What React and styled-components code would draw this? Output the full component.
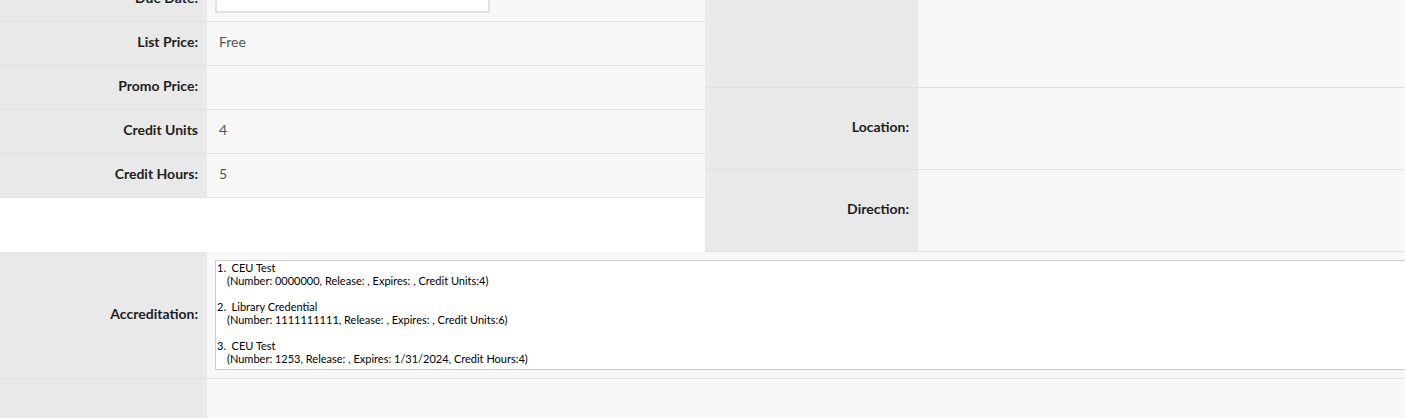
import React from "react";
import styled, { createGlobalStyle } from "styled-components";

const Global = createGlobalStyle`
  html, body { margin: 0; padding: 0; overflow: hidden; background: #fff; }
  body { font-family: Lato, "Open Sans", sans-serif; }
`;

const Page = styled.div`
  margin-top: -22px;
  width: 1405px;
`;

const Top = styled.div`
  display: grid;
  grid-template-columns: 705px 1fr;
`;

const Column = styled.div`
  display: flex;
  flex-direction: column;
  background: #fff;
`;

const Row = styled.div`
  display: grid;
  grid-template-columns: ${(p) => p.$label}px 1fr;
  height: ${(p) => p.$h}px;
  border-bottom: 1px solid #e2e2e2;
  box-sizing: border-box;
`;

const Label = styled.div`
  background: #e9e9e9;
  display: flex;
  align-items: center;
  justify-content: flex-end;
  padding-right: 9px;
  padding-bottom: ${(p) => (p.$shift != null ? p.$shift : 5)}px;
  box-sizing: border-box;
  font-size: 14px;
  font-weight: 700;
  color: #1e1e1e;
`;

const Value = styled.div`
  background: #f8f8f8;
  display: flex;
  align-items: center;
  padding-left: ${(p) => (p.$pad != null ? p.$pad : 12)}px;
  padding-bottom: ${(p) => (p.$shift != null ? p.$shift : 5)}px;
  box-sizing: border-box;
  font-size: 14px;
  color: #555;
  overflow: hidden;
`;

const DateInput = styled.div`
  width: 275px;
  height: 26px;
  box-sizing: border-box;
  border: 2px solid #e2e2e2;
  background: #fff;
`;

const AccRow = styled.div`
  display: grid;
  grid-template-columns: 207px 1fr;
  border-bottom: 1px solid #e2e2e2;
`;

const AccValue = styled.div`
  background: #f8f8f8;
  padding: 8px 0 8px 8px;
  overflow: hidden;
`;

const AccBox = styled.div`
  width: 1250px;
  height: 110px;
  box-sizing: border-box;
  border: 1px solid #cfcfcf;
  background: #fff;
  padding: 0 1px;
  font-family: Lato, sans-serif;
  font-size: 11px;
  line-height: 13px;
  color: #000;
`;

const AccItem = styled.div`
  margin-bottom: 13px;
  white-space: pre;
`;

const AccDetail = styled.div`
  padding-left: 10px;
  white-space: pre;
`;

const BottomRow = styled.div`
  display: grid;
  grid-template-columns: 207px 1fr;
  height: 60px;
`;

const leftRows = [
  { label: "Due Date:", input: true },
  { label: "List Price:", value: "Free" },
  { label: "Promo Price:", value: "" },
  { label: "Credit Units", value: "4" },
  { label: "Credit Hours:", value: "5" },
];

const rightRows = [
  { label: "", h: 110 },
  { label: "Location:", h: 82 },
  { label: "Direction:", h: 82 },
];

const accreditations = [
  { title: "1.  CEU Test", detail: "(Number: 0000000, Release: , Expires: , Credit Units:4)" },
  { title: "2.  Library Credential", detail: "(Number: 1111111111, Release: , Expires: , Credit Units:6)" },
  { title: "3.  CEU Test", detail: "(Number: 1253, Release: , Expires: 1/31/2024, Credit Hours:4)" },
];

export default function App() {
  return (
    <>
      <Global />
      <Page>
        <Top>
          <Column>
            {leftRows.map((r) => (
              <Row key={r.label} $label={207} $h={44}>
                <Label>{r.label}</Label>
                <Value $pad={r.input ? 8 : 12} $shift={r.input ? 0 : 5}>
                  {r.input ? <DateInput /> : r.value}
                </Value>
              </Row>
            ))}
          </Column>
          <Column>
            {rightRows.map((r, i) => (
              <Row key={i} $label={213} $h={r.h}>
                <Label>{r.label}</Label>
                <Value />
              </Row>
            ))}
          </Column>
        </Top>
        <AccRow>
          <Label $shift={4}>Accreditation:</Label>
          <AccValue>
            <AccBox>
              {accreditations.map((a, i) => (
                <AccItem key={i}>
                  {a.title}
                  <AccDetail>{a.detail}</AccDetail>
                </AccItem>
              ))}
            </AccBox>
          </AccValue>
        </AccRow>
        <BottomRow>
          <Label />
          <Value />
        </BottomRow>
      </Page>
    </>
  );
}
